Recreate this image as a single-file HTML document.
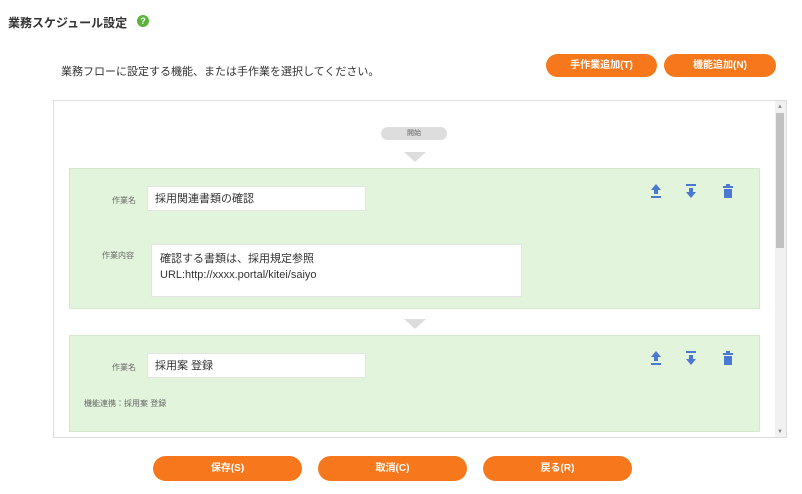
<!DOCTYPE html>
<html><head><meta charset="utf-8"><style>
*{box-sizing:border-box;margin:0;padding:0}
body{width:802px;height:494px;background:#fff;font-family:"Liberation Sans","Noto Sans CJK JP",sans-serif;color:#333;position:relative;overflow:hidden}
.a{position:absolute}
.btn{position:absolute;background:#f7781c;color:#fff;font-weight:bold;font-size:10px;border-radius:13px;text-align:center}
.green{position:absolute;left:69px;width:691px;background:#e2f4dc;border:1px solid #d4e8cc}
.in{position:absolute;background:#fff;border:1px solid #e4e4e4;font-size:11px;padding-left:7px}
.lbl{position:absolute;font-size:8px;color:#666}
.ic{position:absolute}
</style></head><body>
<div class="a" style="left:8px;top:14px;font-size:12px;font-weight:bold;color:#333">業務スケジュール設定</div>
<div class="a" style="left:137px;top:15px;width:12px;height:12px;border-radius:50%;background:#5bb33c;color:#fff;font-size:9px;font-weight:bold;text-align:center;line-height:12px">?</div>
<div class="a" style="left:61px;top:63px;font-size:11px;color:#333">業務フローに設定する機能、または手作業を選択してください。</div>
<div class="btn" style="left:546px;top:54px;width:111px;height:23px;line-height:23px">手作業追加(T)</div>
<div class="btn" style="left:664px;top:54px;width:112px;height:23px;line-height:23px">機能追加(N)</div>

<div class="a" style="left:53px;top:100px;width:734px;height:338px;border:1px solid #ddd;overflow:hidden">
 <div class="a" style="right:0;top:0;width:11px;height:336px;background:#f1f1f1"></div>
 <div class="a" style="right:2px;top:12px;width:8px;height:135px;background:#c1c1c1"></div>
 <div class="a" style="right:3px;top:3px;font-size:6px;color:#888">▲</div>
 <div class="a" style="right:3px;bottom:2px;font-size:6px;color:#888">▼</div>
</div>
<div class="a" style="left:381px;top:127px;width:66px;height:13px;border-radius:7px;background:#ddd;font-size:7px;color:#666;text-align:center;line-height:13px">開始</div>
<svg class="ic" style="left:404px;top:152px" width="22" height="10"><path d="M0 0L11 10L22 0Z" fill="#ddd"/></svg>

<div class="green" style="top:168px;height:141px"></div>
<div class="lbl" style="left:112px;top:195px">作業名</div>
<div class="in" style="left:147px;top:186px;width:219px;height:25px;line-height:24px">採用関連書類の確認</div>
<div class="lbl" style="left:102px;top:250px">作業内容</div>
<div class="in" style="left:151px;top:244px;width:371px;height:53px;padding-top:6px;line-height:16px;padding-left:8px">確認する書類は、採用規定参照<br>URL:http://xxxx.portal/kitei/saiyo</div>

<svg class="ic" style="left:404px;top:319px" width="22" height="10"><path d="M0 0L11 10L22 0Z" fill="#ddd"/></svg>
<div class="green" style="top:335px;height:97px"></div>
<div class="lbl" style="left:112px;top:362px">作業名</div>
<div class="in" style="left:147px;top:353px;width:219px;height:25px;line-height:24px">採用案 登録</div>
<div class="lbl" style="left:84px;top:398px">機能連携：採用案 登録</div>

<svg class="ic" style="left:649px;top:183px" width="96" height="16">
<g fill="#4a78d4">
<path d="M2 13H12V15H2Z M7 1L12 7H9V11H5V7H2Z"/>
<path d="M37 1H47V3H37Z M40 5H44V9H47L42 15L37 9H40Z"/>
<path d="M74 3H84V5H74Z M77 1H81V3H77Z M75 6H83V15H75Z"/>
</g></svg>
<svg class="ic" style="left:649px;top:350px" width="96" height="16">
<g fill="#4a78d4">
<path d="M2 13H12V15H2Z M7 1L12 7H9V11H5V7H2Z"/>
<path d="M37 1H47V3H37Z M40 5H44V9H47L42 15L37 9H40Z"/>
<path d="M74 3H84V5H74Z M77 1H81V3H77Z M75 6H83V15H75Z"/>
</g></svg>

<div class="btn" style="left:153px;top:456px;width:149px;height:25px;line-height:25px">保存(S)</div>
<div class="btn" style="left:318px;top:456px;width:149px;height:25px;line-height:25px">取消(C)</div>
<div class="btn" style="left:483px;top:456px;width:149px;height:25px;line-height:25px">戻る(R)</div>
</body></html>
